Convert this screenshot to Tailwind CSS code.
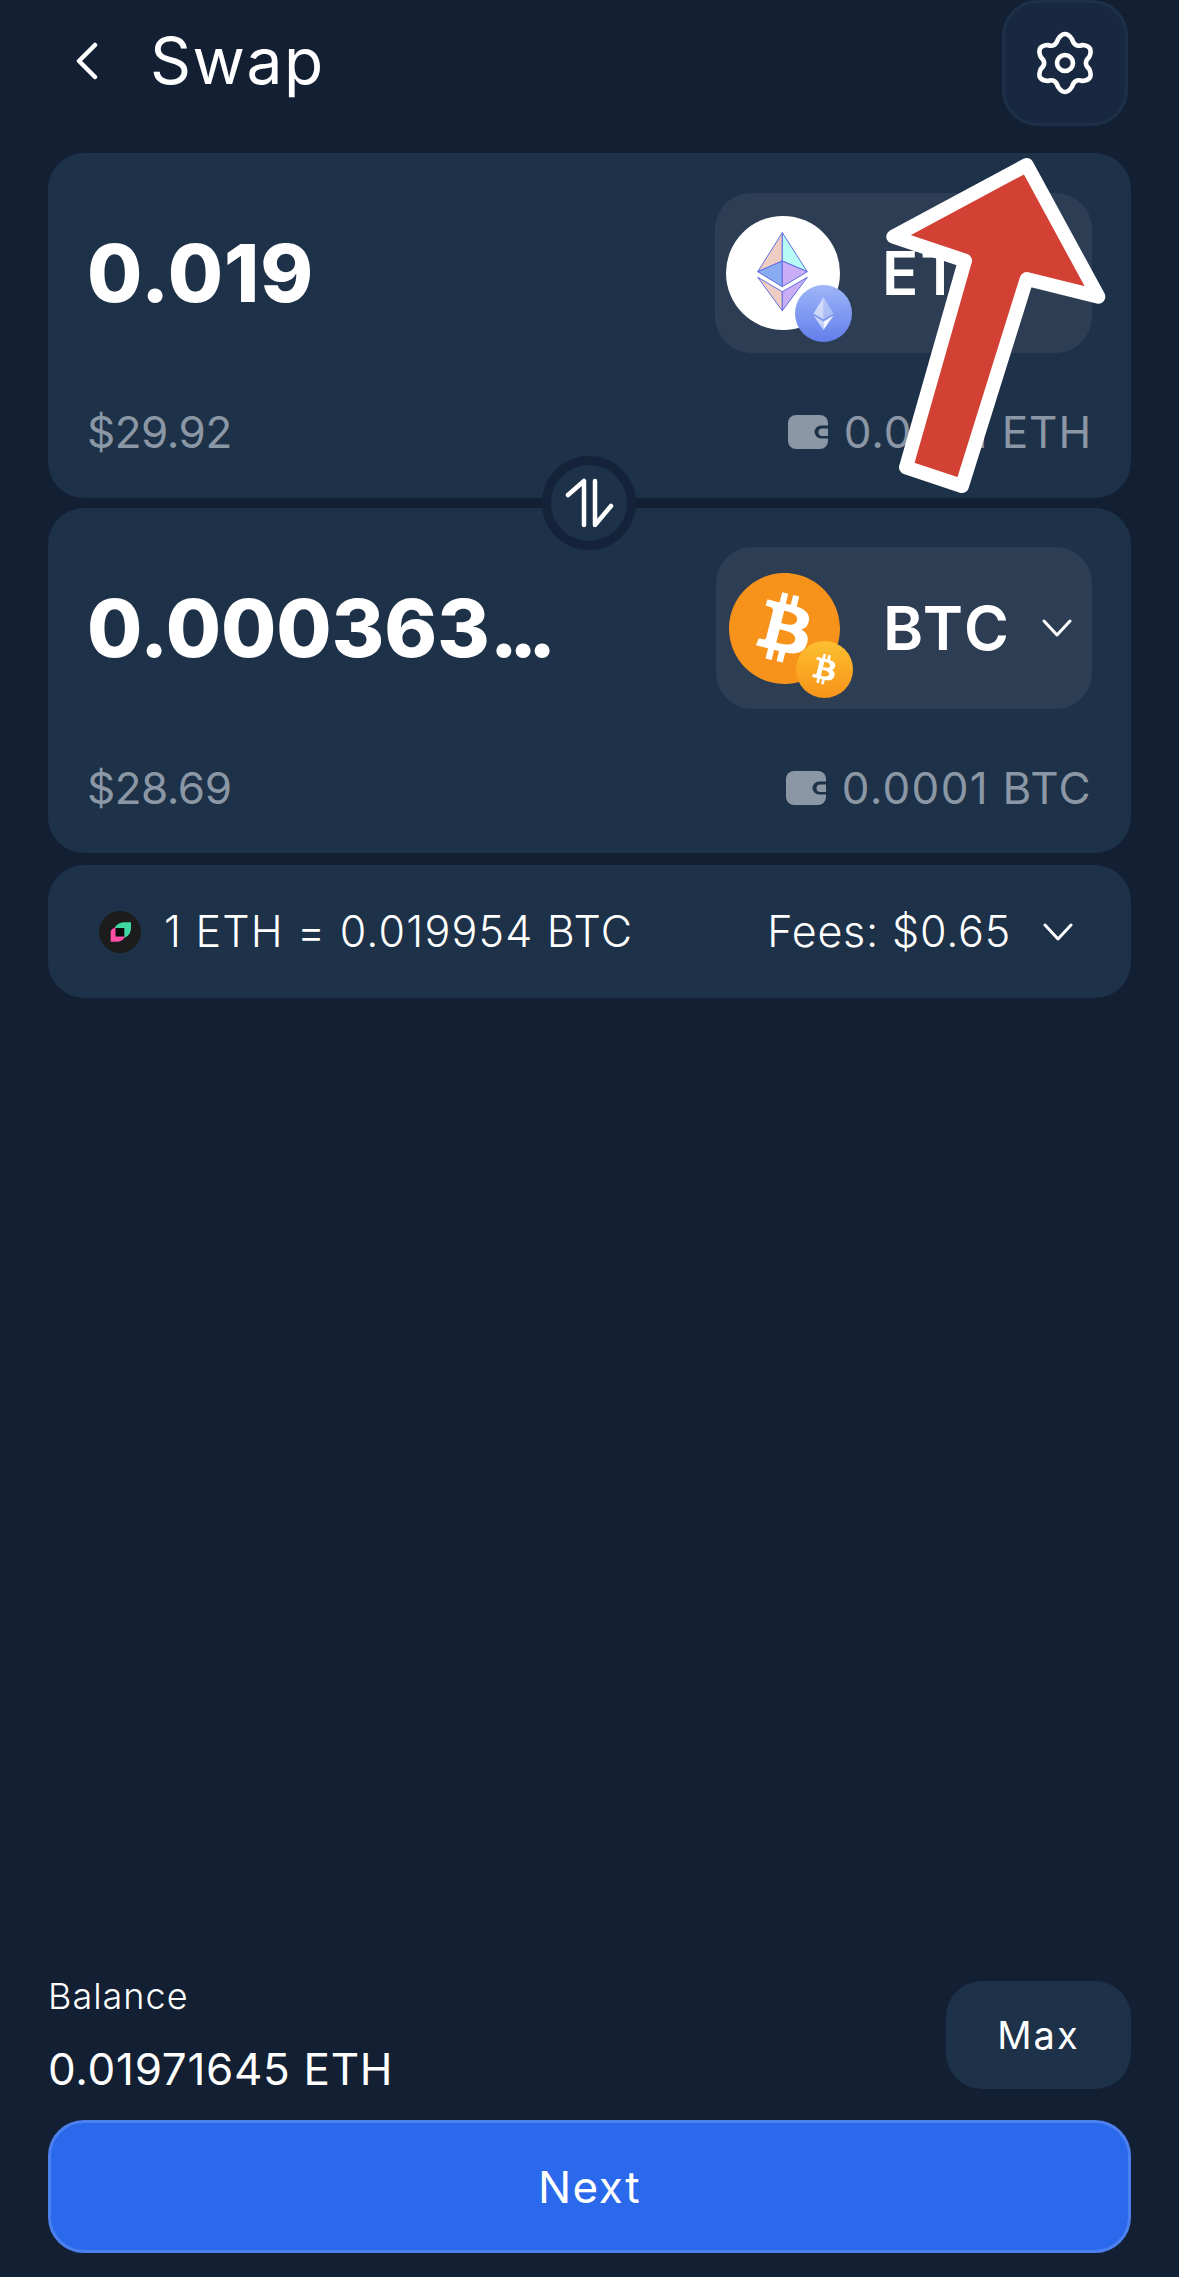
<!DOCTYPE html>
<html>
<head>
<meta charset="utf-8">
<script src="https://cdn.jsdelivr.net/npm/@tailwindcss/browser@4"></script>
</head>
<body class="m-0 bg-[#131f33]">
<div class="relative w-[1179px] h-[2277px] overflow-hidden bg-[#131f33] text-white font-['Inter',sans-serif] flex flex-col">
  <!-- header -->
  <header class="h-[153px] shrink-0 pl-[76px] pr-[51px] flex items-start justify-between">
    <div class="flex items-center h-[122px]">
      <svg class="w-[22px] h-[38px]" viewBox="0 0 22 38" fill="none" stroke="#fff" stroke-width="4.5" stroke-linecap="round" stroke-linejoin="round"><path d="M19 3 3 19l16 16"/></svg>
      <span class="ml-[52px] text-[64px] font-normal tracking-[1.500px] leading-none">Swap</span>
    </div>
    <div class="w-[126px] h-[126px] rounded-[36px] bg-[#182840] border-[3px] border-[#1c3048] flex items-center justify-center">
      <svg class="w-[64px] h-[64px]" viewBox="-32 -32 64 64" fill="none" stroke="#fff" stroke-width="4.6" stroke-linecap="round" stroke-linejoin="round">
        <path d="M-6.89-24.03Q0-34 6.89-24.03Q9.5-15 17.37-17.98Q29-17 24.26-6.05Q17.500 0 24.26 6.05Q29 17 17.37 17.98Q9.5 15 6.89 24.03Q0 34-6.89 24.03Q-9.5 15-17.37 17.98Q-29 17-24.26 6.05Q-17.500 0-24.26-6.05Q-29-17-17.37-17.98Q-9.5-15-6.89-24.03Z"/>
        <circle r="8"/>
      </svg>
    </div>
  </header>

  <!-- cards -->
  <main class="px-[48px] flex flex-col">
    <section class="h-[345px] rounded-[36px] bg-[#1d3148] pl-[39px] pr-[39px] pt-[40px] flex flex-col">
      <div class="flex items-center justify-between">
        <span class="text-[80px] font-extrabold leading-none tracking-[1px]">0.019</span>
        <div class="w-[377px] h-[160px] rounded-[36px] bg-[#2d3e54] flex items-center pl-[11px]">
          <div class="relative w-[114px] h-[114px]">
            <svg class="w-[114px] h-[114px]" viewBox="0 0 114 114">
              <circle cx="57" cy="57" r="57" fill="#fff"/>
              <g stroke="#5f6ee0" stroke-width="1" stroke-linejoin="round">
                <path d="M56.3 16.7 31.7 55.7 56.3 45Z" fill="#f0cdc2"/>
                <path d="M56.3 16.7 81.3 55.7 56.3 45Z" fill="#b8fbf6"/>
                <path d="M56.3 45 31.7 55.7 56.3 70.7Z" fill="#88abf1"/>
                <path d="M56.3 45 81.3 55.7 56.3 70.7Z" fill="#caadf7"/>
                <path d="M31.7 61.3 56.3 75.7 56.3 94.7Z" fill="#f0cdc2"/>
                <path d="M81.3 61.3 56.3 75.7 56.3 94.7Z" fill="#caadf7"/>
              </g>
            </svg>
            <svg class="absolute left-[69px] top-[69px] w-[57px] h-[57px]" viewBox="0 0 57 57">
              <defs><linearGradient id="e" x1="0" y1="0" x2="0" y2="1"><stop offset="0" stop-color="#9fb6f9"/><stop offset="1" stop-color="#627eea"/></linearGradient></defs>
              <circle cx="28.5" cy="28.5" r="28.5" fill="url(#e)"/>
              <path d="M28.5 12 18.5 28.5 28.5 34.5Z" fill="#fff" fill-opacity=".6"/>
              <path d="M28.5 12 38.5 28.5 28.5 34.5Z" fill="#fff" fill-opacity=".35"/>
              <path d="M18.5 30.5 28.5 45 28.5 36.5Z" fill="#fff" fill-opacity=".6"/>
              <path d="M38.5 30.5 28.5 45 28.5 36.5Z" fill="#fff" fill-opacity=".9"/>
            </svg>
          </div>
          <span class="ml-[42px] text-[60px] font-semibold leading-none tracking-[2px]">ETH</span>
        </div>
      </div>
      <div class="mt-[57px] flex items-center justify-between text-[44px] leading-none text-[#8b97a5]">
        <span class="tracking-[-0.5px]">$29.92</span>
        <span class="flex items-center">
          <svg class="w-[40px] h-[34px] mr-[16px]" viewBox="0 0 40 34"><rect width="40" height="34" rx="8" fill="#8b97a5"/><rect x="26.500" y="10.500" width="20" height="13" rx="6.500" fill="#1d3148"/><rect x="30.500" y="13.500" width="12" height="7.500" rx="3.700" fill="#8b97a5"/></svg>
          <span class="tracking-[0.900px]">0.0001 ETH</span>
        </span>
      </div>
    </section>

    <section class="mt-[10px] h-[345px] rounded-[36px] bg-[#1d3148] pl-[39px] pr-[39px] pt-[39px] flex flex-col">
      <div class="flex items-center justify-between">
        <span class="text-[80px] font-extrabold leading-none">0.000363<span class="tracking-[-9px]">...</span></span>
        <div class="w-[376px] h-[162px] rounded-[36px] bg-[#2d3e54] flex items-center pl-[13px]">
          <div class="relative w-[111px] h-[111px]">
            <svg class="w-[111px] h-[111px]" viewBox="0 0 24 24">
              <circle cx="12" cy="12" r="9" fill="#fff"/>
              <path fill="#f7931a" d="M23.638 14.904c-1.602 6.43-8.113 10.34-14.542 8.736C2.67 22.05-1.244 15.525.362 9.105 1.962 2.67 8.475-1.243 14.9.358c6.43 1.605 10.342 8.115 8.738 14.548v-.002zm-6.35-4.613c.24-1.59-.974-2.45-2.64-3.03l.54-2.153-1.315-.33-.525 2.107c-.345-.087-.705-.167-1.064-.25l.526-2.127-1.32-.33-.54 2.165c-.285-.067-.565-.132-.84-.2l-1.815-.45-.35 1.407s.975.225.955.236c.535.136.63.486.615.766l-1.477 5.92c-.075.166-.24.406-.614.314.015.02-.96-.24-.96-.24l-.66 1.51 1.71.426.93.242-.54 2.19 1.32.327.54-2.17c.36.1.705.19 1.05.273l-.51 2.154 1.32.33.545-2.19c2.24.427 3.93.257 4.64-1.774.57-1.637-.03-2.58-1.217-3.196.854-.193 1.5-.76 1.68-1.93h.01zm-3.01 4.22c-.404 1.64-3.157.75-4.05.53l.72-2.9c.896.23 3.757.67 3.33 2.37zm.41-4.24c-.37 1.49-2.662.735-3.405.55l.654-2.64c.744.18 3.137.524 2.75 2.084v.006z"/>
            </svg>
            <svg class="absolute left-[67px] top-[68px] w-[57px] h-[57px]" viewBox="0 0 24 24">
              <defs><linearGradient id="b" x1="0" y1="0" x2="0" y2="1"><stop offset="0" stop-color="#fcc030"/><stop offset="1" stop-color="#f7931a"/></linearGradient></defs>
              <circle cx="12" cy="12" r="12" fill="url(#b)"/>
              <g transform="translate(1.800 1.800) scale(.85)">
                <path fill="#fff" d="M17.288 10.291c.24-1.59-.974-2.45-2.64-3.03l.54-2.153-1.315-.33-.525 2.107c-.345-.087-.705-.167-1.064-.25l.526-2.127-1.32-.33-.54 2.165c-.285-.067-.565-.132-.84-.2l-1.815-.45-.35 1.407s.975.225.955.236c.535.136.63.486.615.766l-1.477 5.92c-.075.166-.24.406-.614.314.015.02-.96-.24-.96-.24l-.66 1.51 1.71.426.93.242-.54 2.19 1.32.327.54-2.17c.36.1.705.19 1.05.273l-.51 2.154 1.32.33.545-2.19c2.24.427 3.93.257 4.64-1.774.57-1.637-.03-2.58-1.217-3.196.854-.193 1.5-.76 1.68-1.93h.01zm-3.01 4.22c-.404 1.64-3.157.75-4.05.53l.72-2.9c.896.23 3.757.67 3.33 2.37zm.41-4.24c-.37 1.49-2.662.735-3.405.55l.654-2.64c.744.18 3.137.524 2.75 2.084v.006z" fill-rule="evenodd"/>
              </g>
            </svg>
          </div>
          <span class="ml-[43px] text-[61px] font-semibold leading-none tracking-[3px]">BTC</span>
          <svg class="ml-[30px] w-[30px] h-[18px]" viewBox="0 0 30 18" fill="none" stroke="#fff" stroke-width="3" stroke-linecap="round" stroke-linejoin="round"><path d="M2 2l13 14L28 2"/></svg>
        </div>
      </div>
      <div class="mt-[57px] flex items-center justify-between text-[44px] leading-none text-[#8b97a5]">
        <span class="tracking-[-0.5px]">$28.69</span>
        <span class="flex items-center">
          <svg class="w-[40px] h-[34px] mr-[16px]" viewBox="0 0 40 34"><rect width="40" height="34" rx="8" fill="#8b97a5"/><rect x="26.500" y="10.500" width="20" height="13" rx="6.500" fill="#1d3148"/><rect x="30.500" y="13.500" width="12" height="7.500" rx="3.700" fill="#8b97a5"/></svg>
          <span class="tracking-[1.300px]">0.0001 BTC</span>
        </span>
      </div>
    </section>

    <section class="mt-[12px] h-[133px] rounded-[36px] bg-[#1d3148] pl-[51px] pr-[58px] flex items-center justify-between text-[43px] font-light leading-none">
      <div class="flex items-center">
        <svg class="w-[42px] h-[42px] mr-[23px]" viewBox="0 0 42 42">
          <circle cx="21" cy="21" r="21" fill="#1c1c1c"/>
          <path d="M16 16Q19 11.300 26 11.300H32V17Q32 24 25.300 27V17H16Z" fill="#3ed79f"/>
          <path d="M11.700 20Q12.500 18 16.700 16V25.300H25.300V27Q23 30.700 18 30.700H11.700Z" fill="#ff4fa8"/>
          <rect x="16.700" y="17" width="8.400" height="8.400" fill="#0d0d0d"/>
        </svg>
        <span class="tracking-[1.200px]">1 ETH = 0.019954 BTC</span>
      </div>
      <div class="flex items-center">
        <span class="tracking-[0.800px]">Fees: $0.65</span>
        <svg class="ml-[32px] w-[30px] h-[18px]" viewBox="0 0 30 18" fill="none" stroke="#fff" stroke-width="3" stroke-linecap="round" stroke-linejoin="round"><path d="M2 2l13 14L28 2"/></svg>
      </div>
    </section>
  </main>

  <div class="flex-1"></div>

  <!-- footer -->
  <footer class="px-[48px] pb-[24px] flex flex-col">
    <div class="flex items-center justify-between h-[108px]">
      <div class="flex flex-col font-light">
        <span class="text-[36px] leading-none tracking-[1px] -mt-[1px]">Balance</span>
        <span class="mt-[33px] text-[44px] font-normal leading-none tracking-[0.700px]">0.01971645 ETH</span>
      </div>
      <button class="w-[185px] h-[108px] rounded-[36px] bg-[#1d3148] text-[38px] font-normal tracking-[2px]">Max</button>
    </div>
    <button class="mt-[31px] h-[133px] rounded-[36px] bg-[#2a68ec] border-[3px] border-[#4d80ef] text-[44px] font-normal tracking-[1.500px]">Next</button>
  </footer>

  <!-- swap toggle over the seam between the cards -->
  <div class="absolute left-[542px] top-[456px] w-[94px] h-[94px] rounded-full bg-[#1d3148] border-[9px] border-[#14233a] flex items-center justify-center">
    <svg class="w-[76px] h-[76px]" viewBox="0 0 76 76" fill="none" stroke="#fff" stroke-width="4.500" stroke-linecap="round" stroke-linejoin="round">
      <path d="M17 30 33 16V60"/>
      <path d="M44 16V60L60 41"/>
    </svg>
  </div>

  <!-- annotation arrow -->
  <svg class="absolute left-0 top-0 w-[1179px] h-[2277px] pointer-events-none" viewBox="0 0 1179 2277" fill="none">
    <path d="M1026.700 165 893.300 236.700 965 260.700 906 467.300 962 486 1026.700 279 1098.300 296.700Z" fill="#d34134" stroke="#fff" stroke-width="14" stroke-linejoin="round"/>
  </svg>
</div>
</body>
</html>
